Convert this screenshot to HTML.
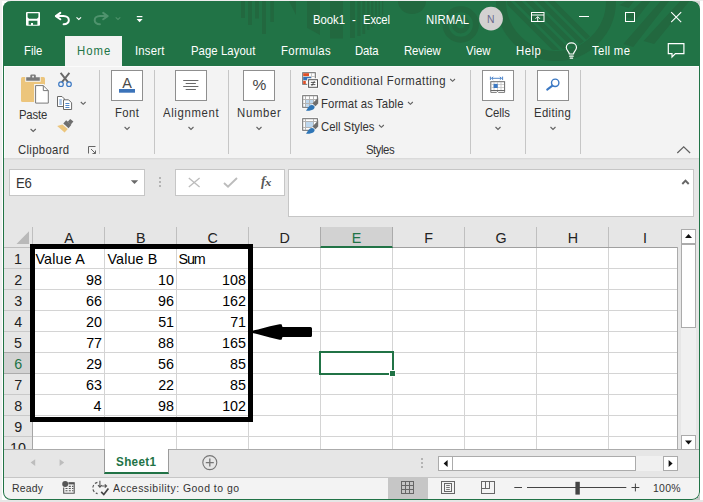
<!DOCTYPE html>
<html><head><meta charset="utf-8"><title>Book1 - Excel</title>
<style>
html,body{margin:0;padding:0}
body{width:703px;height:502px;overflow:hidden;background:#fff;position:relative;font-family:"Liberation Sans",sans-serif}
div,span,svg{position:absolute;box-sizing:border-box}
.t{white-space:nowrap;line-height:1}
.sep{width:1px;top:70px;height:84px;background:#c6c6c6}
.bx{width:32px;height:31px;top:70px;background:#fff;border:1px solid #8f8f8f}
.vl{width:1px;top:248px;height:201px;background:#d4d4d4}
.hl{height:1px;left:33px;width:645px;background:#d4d4d4}
.hs{width:1px;top:227px;height:20px;background:#bfbfbf}
.rs{height:1px;left:4px;width:28px;background:#c9c9c9}
</style></head><body>
<!-- title bar -->
<div style="left:3px;top:1px;width:697px;height:65px;background:#217346"></div>
<svg style="left:3px;top:1px" width="697" height="65" viewBox="3 1 697 65"><defs><clipPath id="cin"><circle cx="556" cy="1" r="49"/></clipPath><clipPath id="cr"><rect x="600" y="1" width="100" height="50"/></clipPath></defs>
<g fill="#22683f">
<rect x="241" y="1" width="4" height="17"/><rect x="248" y="1" width="4" height="24"/><rect x="255" y="1" width="4" height="17.5"/><rect x="262" y="1" width="4" height="33"/><rect x="270.3" y="1" width="3.5" height="21"/>
<path d="M289 1 H296 V15 Z"/>
<path d="M307 1 H320 V35 L307 27.7 Z"/>
<rect x="330" y="1" width="13" height="37.5"/><rect x="350" y="1" width="5" height="37"/><rect x="357.3" y="1" width="3.2" height="35"/><rect x="362.4" y="1" width="2.8" height="33"/><rect x="367" y="1" width="2.5" height="29"/><rect x="371.2" y="1" width="2.1" height="26"/><rect x="375" y="1" width="1.8" height="22"/><rect x="378.5" y="1" width="1.5" height="18"/><rect x="382" y="1" width="1.2" height="14"/>
<path d="M398 1 A14 13 0 0 0 426 1 Z"/>
</g>
<g fill="none" stroke="#22683f">
<circle cx="460.7" cy="24.5" r="15.2" stroke-width="6"/>
<circle cx="460.7" cy="24.5" r="6.5" stroke-width="4.8"/>
<circle cx="556" cy="1" r="55" stroke-width="10"/>
</g>
<g stroke="#22683f" stroke-width="5" clip-path="url(#cin)">
<path d="M496 -10 L596 90 M507 -10 L607 90 M518 -10 L618 90 M529 -10 L629 90 M540 -10 L640 90"/>
</g>
<path fill="#22683f" d="M626.5 1 H634.0 L628.5 8 L619.5 5 Z M642 1 H650.5 L635.7 20 L625.7 17 Z M660.7 1 H669.2 L633.3 47 L623.3 44 Z M680.3 1 H689.5 L654.2 44 L643.5 41 Z"/>
</svg>
<div style="left:65px;top:36px;width:57px;height:30px;background:#f3f3f3"></div>
<!-- ribbon -->
<div style="left:4px;top:66px;width:695px;height:92px;background:#f3f3f3;border-top:1px solid #fbfbfb;border-left:1px solid #fbfbfb"></div>
<div style="left:4px;top:158px;width:695px;height:341px;background:#e6e6e6"></div>
<div style="left:4px;top:158px;width:695px;height:1px;background:#dadada"></div><div style="left:4px;top:159px;width:695px;height:1px;background:#e1e1e1"></div>
<div class="sep" style="left:99px"></div><div class="sep" style="left:154px"></div><div class="sep" style="left:228px"></div><div class="sep" style="left:290px"></div><div class="sep" style="left:470px"></div><div class="sep" style="left:525px"></div><div class="sep" style="left:580px"></div>
<div class="bx" style="left:111px"></div><div class="bx" style="left:175px"></div><div class="bx" style="left:243px"></div><div class="bx" style="left:482px"></div><div class="bx" style="left:537px"></div>
<!-- formula bar -->
<div style="left:9px;top:169px;width:136px;height:27px;background:#fff;border:1px solid #c6c6c6"></div>
<div style="left:175px;top:169px;width:110px;height:27px;background:#fff;border:1px solid #c6c6c6"></div>
<div style="left:288px;top:169px;width:406px;height:48px;background:#fff;border:1px solid #c6c6c6"></div>
<!-- grid -->
<div style="left:33px;top:248px;width:645px;height:201px;background:#fff"></div>
<div class="vl" style="left:104px"></div><div class="vl" style="left:176px"></div><div class="vl" style="left:248px"></div><div class="vl" style="left:320px"></div><div class="vl" style="left:392px"></div><div class="vl" style="left:464px"></div><div class="vl" style="left:536px"></div><div class="vl" style="left:608px"></div><div class="hl" style="top:268px"></div><div class="hl" style="top:289px"></div><div class="hl" style="top:310px"></div><div class="hl" style="top:331px"></div><div class="hl" style="top:352px"></div><div class="hl" style="top:373px"></div><div class="hl" style="top:394px"></div><div class="hl" style="top:415px"></div><div class="hl" style="top:436px"></div><div class="hs" style="left:32px"></div><div class="hs" style="left:104px"></div><div class="hs" style="left:176px"></div><div class="hs" style="left:248px"></div><div class="hs" style="left:320px"></div><div class="hs" style="left:392px"></div><div class="hs" style="left:464px"></div><div class="hs" style="left:536px"></div><div class="hs" style="left:608px"></div><div class="rs" style="top:268px"></div><div class="rs" style="top:289px"></div><div class="rs" style="top:310px"></div><div class="rs" style="top:331px"></div><div class="rs" style="top:352px"></div><div class="rs" style="top:373px"></div><div class="rs" style="top:394px"></div><div class="rs" style="top:415px"></div><div class="rs" style="top:436px"></div>
<!-- header lines -->
<div style="left:4px;top:247px;width:674px;height:1px;background:#a0a0a0"></div><div style="left:4px;top:247px;width:28px;height:1px;background:#bdbdbd"></div>
<div style="left:32px;top:248px;width:1px;height:201px;background:#a6a6a6"></div>
<div style="left:320px;top:227px;width:73px;height:21px;background:#d2d2d2;border-left:1px solid #ababab;border-right:1px solid #ababab;border-bottom:2px solid #217346"></div>
<div style="left:677px;top:247px;width:1px;height:203px;background:#ababab"></div>
<div style="left:4px;top:352px;width:28px;height:22px;background:#d2d2d2;border-top:1px solid #ababab;border-bottom:1px solid #ababab"></div>
<!-- selection -->
<div style="left:319px;top:351px;width:75px;height:24px;border:2px solid #217346"></div>
<div style="left:389px;top:370px;width:7px;height:7px;background:#217346;border:1px solid #fff"></div>
<!-- black box + arrow -->
<div style="left:30px;top:244px;width:223px;height:178px;border:5px solid #000"></div>
<svg style="left:250px;top:320px" width="70" height="24" viewBox="250 320 70 24"><path d="M252.5 330.7 L258 329.4 L270 326.2 L279.5 324.3 L281.5 324.2 L282.5 327 L310.5 327 Q312 327 312 328.5 L312 335.5 Q312 337 310.5 337 L282.5 337 L281.5 339.8 L279.5 339.7 L270 337.6 L258 334.3 L252.5 333 Z" fill="#000"/></svg>
<!-- bottom: tab bar / scrollbars / status -->
<div style="left:4px;top:449px;width:695px;height:28px;background:#e6e6e6;border-top:1px solid #ababab"></div>
<div style="left:4px;top:477px;width:695px;height:22px;background:#f3f3f3;border-top:1px solid #c6c6c6"></div>
<div style="left:104px;top:449px;width:65px;height:25px;background:#fff;border-left:1px solid #9b9b9b;border-right:1px solid #9b9b9b;border-bottom:2px solid #217346"></div>
<svg style="left:0;top:0" width="703" height="502" viewBox="0 0 703 502" fill="none">
<!-- QAT -->
<path fill="#fff" fill-rule="evenodd" d="M27 12 H39 Q40 12 40 13 V24.7 Q40 25.7 39 25.7 H27 Q26 25.7 26 24.7 V13 Q26 12 27 12 Z M27.6 13.2 V17.3 L29 18.7 H37 L38.4 17.3 V13.2 Z M28.6 20.7 V24.7 H31 V22.9 H33 V24.7 H37.4 V20.7 Z"/>
<g stroke="#fff" stroke-width="2" fill="none" stroke-linecap="round" stroke-linejoin="round">
<path d="M60.3 12.9 L55.9 16.1 L60.3 19.3"/>
<path d="M56.2 16.1 H63.4 C70.6 16.1 70.6 24.2 63.6 24.2"/>
</g>
<path d="M76.5 17.3 L78.8 19.5 L81.1 17.3" stroke="#fff" stroke-width="1.1"/>
<g stroke="#4f936d" stroke-width="2" fill="none" stroke-linecap="round" stroke-linejoin="round">
<path d="M103.2 12.9 L107.6 16.1 L103.2 19.3"/>
<path d="M107.3 16.1 H100.1 C92.9 16.1 92.9 24.2 99.9 24.2"/>
</g>
<path d="M115.7 17.3 L118 19.5 L120.3 17.3" stroke="#4c9069" stroke-width="1.1"/>
<rect x="136.8" y="16" width="5.6" height="1.2" fill="#fff"/>
<path d="M136.6 19 H142.6 L139.6 22.2 Z" fill="#fff"/>
<!-- avatar -->
<circle cx="491" cy="18.6" r="11.9" fill="#d3d1d1"/>
<!-- window controls -->
<g stroke="#fff" stroke-width="1" fill="none">
<rect x="531.5" y="12.5" width="12.5" height="9"/>
<path d="M531.5 15 H544"/>
<path d="M537.7 21.5 V16.8 M535.5 18.8 L537.7 16.6 L539.9 18.8"/>
<path d="M579 16.5 H589"/>
<rect x="625.5" y="12.5" width="9" height="9"/>
<path d="M671.2 12.2 L681.2 22.2 M681.2 12.2 L671.2 22.2" stroke-width="1.1"/>
</g>
<!-- bulb -->
<g stroke="#fff" stroke-width="1.2" fill="none" stroke-linecap="round">
<path d="M569.3 54 C569.3 51.5 566.3 50.6 566.3 47.6 C566.3 44.8 568.6 42.9 571.4 42.9 C574.2 42.9 576.5 44.8 576.5 47.6 C576.5 50.6 573.5 51.5 573.5 54 Z"/>
<path d="M569.6 56.2 H573.2 M570.2 58.2 H572.6"/>
</g>
<!-- comment -->
<path d="M668.3 43.7 H683.9 V53.6 H675.4 L672 57 V53.6 H668.3 Z" stroke="#fff" stroke-width="1.2" fill="none"/>


<!-- paste icon -->
<rect x="21" y="77" width="24" height="25" rx="1.6" fill="#ecc57c"/>
<rect x="25.2" y="76.2" width="15.5" height="5.6" fill="#f3f3f3"/>
<path d="M26.2 77.2 H30.3 V75.6 Q30.3 74.4 31.5 74.4 H34.6 Q35.8 74.4 35.8 75.6 V77.2 H39.8 V80.8 H26.2 Z" fill="#797979"/>
<rect x="32.2" y="75.8" width="1.7" height="1.7" fill="#f3f3f3"/>
<path d="M34.1 84.1 H44 L49.8 89.9 V104.6 H34.1 Z" fill="#f6f6f6"/>
<path d="M35.6 85.6 H43.3 L48.3 90.6 V103.1 H35.6 Z" fill="#fff" stroke="#797979" stroke-width="1"/>
<path d="M43.3 85.6 V90.6 H48.3" stroke="#797979" stroke-width="1" fill="none"/>
<!-- scissors -->
<path d="M60.6 72.8 L68.2 82.3 M69.4 72.8 L61.8 82.3" stroke="#676767" stroke-width="1.9"/>
<circle cx="61" cy="84.2" r="2.3" stroke="#3b78c3" stroke-width="1.2"/>
<circle cx="69" cy="84.2" r="2.3" stroke="#3b78c3" stroke-width="1.2"/>
<!-- copy -->
<path d="M57.5 96.5 H62 L64.5 99 V106.5 H57.5 Z" fill="#fff" stroke="#6a6a6a"/>
<path d="M59.3 100 H61.8 M59.3 102 H61.8 M59.3 104 H61.8" stroke="#3b78c3" stroke-width="0.9"/>
<path d="M63.5 99.8 H68.6 L71.6 102.8 V109.5 H63.5 Z" fill="#fff" stroke="#6a6a6a"/>
<path d="M65.4 103.5 H69.4 M65.4 105.5 H69.4 M65.4 107.5 H69.4" stroke="#3b78c3" stroke-width="0.9"/>
<!-- brush -->
<path d="M70.2 118.9 L73.4 121.6 L70.8 124.4 L67.8 121.8 Z" fill="#6e6e6e"/>
<path d="M66.2 120.2 L71.4 124.8 L68.6 128.2 L63.3 123.6 Z" fill="#6e6e6e"/>
<path d="M62.4 124.4 L67.8 129.1 L64.6 132.6 L57.2 125.9 Z" fill="#ecc57c"/>
<!-- chevrons dark -->
<g stroke="#606060" stroke-width="1.1" fill="none">
<path d="M80.8 102 L83.2 104.3 L85.6 102"/>
<path d="M30.6 129 L33.2 131.5 L35.8 129"/>
<path d="M124.6 127 L127.1 129.4 L129.6 127"/>
<path d="M188.5 127 L191 129.4 L193.5 127"/>
<path d="M256.5 127 L259 129.4 L261.5 127"/>
<path d="M495.5 127 L498 129.4 L500.5 127"/>
<path d="M550.5 127 L553 129.4 L555.5 127"/>
<path d="M450.2 79 L452.6 81.3 L455 79"/>
<path d="M408 102 L410.4 104.3 L412.8 102"/>
<path d="M379 125 L381.4 127.3 L383.8 125"/>
<path d="M677.3 153 L683.7 146.8 L690.1 153" stroke-width="1.2"/>
</g>
<!-- dialog launcher -->
<path d="M88.5 153.5 V146.5 H95.5" stroke="#666" stroke-width="1" fill="none"/>
<path d="M91 149 L95.5 153.5 M95.5 150.5 V153.5 H92.5" stroke="#666" stroke-width="1" fill="none"/>
<!-- font A bar -->
<rect x="119" y="89" width="16" height="3.7" fill="#3b73b9"/>
<!-- alignment -->
<path d="M183.2 80.5 H198.4 M185.7 83.5 H195.9 M183.2 86.5 H198.4 M185.7 89.5 H195.9" stroke="#6a6a6a" stroke-width="1"/>
<!-- CF icon -->
<rect x="301.2" y="71.2" width="15.6" height="14.5" fill="#fafafa"/>
<rect x="302.7" y="72.7" width="12.6" height="11.6" fill="#fff" stroke="#6a6a6a"/>
<path d="M311.5 73 V84 M303 76.5 H315 M303 80.5 H315" stroke="#c8c8c8"/>
<rect x="303.2" y="73.2" width="5.8" height="2.8" fill="#e04e26"/>
<rect x="303.2" y="77" width="7.8" height="3" fill="#3573b9"/>
<rect x="303.2" y="81" width="2.6" height="3" fill="#e04e26"/>
<rect x="307.2" y="78.2" width="11.8" height="10.6" fill="#f8f8f8"/>
<rect x="308.6" y="79.7" width="8.9" height="7.6" fill="#fff" stroke="#555"/>
<path d="M310.8 82.4 H315.4 M310.8 84.6 H315.4 M314.4 81.2 L311.8 85.8" stroke="#444" stroke-width="0.9"/>
<!-- FT icon -->
<g id="ft">
<rect x="301.2" y="94.2" width="17.7" height="14.5" fill="#fafafa"/>
<rect x="302.7" y="95.7" width="14.7" height="11.6" fill="#fff" stroke="#6a6a6a"/>
<rect x="306" y="100" width="7.5" height="7" fill="#bdd7ee"/>
<path d="M305.5 96 V107 M309.5 96 V107 M313.5 96 V107 M303 99.5 H317 M303 103.5 H317" stroke="#b4b4b4"/>
<path d="M319 97 L311 105.5 L306 111.5 L320 111.5 Z" fill="#f3f3f3"/>
<path d="M318.2 97.4 V103.4 L315.4 106.2 L312.4 103.4 Z" fill="#6e6e6e"/>
<path d="M306 110.8 C308 108 309 104.8 312 104.9 C315.4 105.2 315.4 108.4 312.6 109.8 C310.6 110.8 308 110.8 306 110.8 Z" fill="#2e75b6"/>
</g>
<!-- CS icon -->
<rect x="301.2" y="117.2" width="17.7" height="14.5" fill="#fafafa"/>
<rect x="302.7" y="118.7" width="14.7" height="11.6" fill="#fff" stroke="#6a6a6a"/>
<rect x="306" y="122" width="7.5" height="5.5" fill="#bdd7ee"/>
<path d="M305.5 119 V130 M313.5 119 V130 M303 121.5 H317 M303 127.5 H317" stroke="#b4b4b4"/>
<path d="M319 120 L311 128.5 L306 134.5 L320 134.5 Z" fill="#f3f3f3"/>
<path d="M318.2 120.4 V126.4 L315.4 129.2 L312.4 126.4 Z" fill="#6e6e6e"/>
<path d="M306 133.8 C308 131 309 127.8 312 127.9 C315.4 128.2 315.4 131.4 312.6 132.8 C310.6 133.8 308 133.8 306 133.8 Z" fill="#2e75b6"/>
<!-- cells icon -->
<path d="M490.4 76.6 V80 M502.6 76.6 V80 M491.5 78.3 H501.5 M493.2 76.8 L491.6 78.3 L493.2 79.8 M499.8 76.8 L501.4 78.3 L499.8 79.8" stroke="#3b78c3" stroke-width="0.9"/>
<rect x="490.8" y="81.7" width="13.8" height="8.8" fill="#fff" stroke="#6a6a6a"/>
<path d="M494 82 V90 M497.5 82 V90 M501 82 V90 M491 84.5 H504 M491 87.5 H504" stroke="#c4c4c4" stroke-width="0.8"/>
<rect x="493.6" y="83.9" width="4.1" height="4.1" fill="#3b78c3"/>
<path d="M490.8 90.5 V92.4 H496.5 L497.5 91.4 L498.5 92.4 H504.6 V90.5" stroke="#6a6a6a" stroke-width="0.9"/>
<!-- magnifier -->
<circle cx="555.2" cy="82.8" r="3.7" stroke="#3b78c3" stroke-width="1.4"/>
<path d="M552.4 85.6 L547.2 89.6" stroke="#3b78c3" stroke-width="2" stroke-linecap="round"/>
<!-- name box arrow -->
<path d="M130.8 180.2 H138.2 L134.5 184 Z" fill="#6a6a6a"/>
<!-- dots -->
<path d="M159 177 h2 v2 h-2z M159 181 h2 v2 h-2z M159 185 h2 v2 h-2z" fill="#b4b4b4"/>
<path d="M421 458 h2 v2 h-2z M421 462 h2 v2 h-2z M421 466 h2 v2 h-2z" fill="#b4b4b4"/>
<!-- X / check -->
<path d="M188.8 178 L199.6 187 M199.6 178 L188.8 187" stroke="#bcbcbc" stroke-width="1.3"/>
<path d="M224 183 L228 186.6 L237 178" stroke="#bcbcbc" stroke-width="1.9"/>
<!-- formula caret -->
<path d="M682.3 184 L685.5 180.6 L688.7 184" stroke="#666" stroke-width="1.9"/>
<!-- select all -->
<path d="M29 231.2 V244 H16.5 Z" fill="#b9b9b9"/>
<!-- v scrollbar -->
<rect x="681" y="244" width="15" height="191" fill="#f0f0f0"/>
<rect x="681.5" y="229.5" width="14" height="14" fill="#fff" stroke="#ababab"/>
<rect x="681.5" y="244.5" width="14" height="83" fill="#fff" stroke="#ababab"/>
<rect x="681.5" y="435.5" width="14" height="14" fill="#fff" stroke="#ababab"/>
<path d="M685 238 L688.5 234 L692 238 Z" fill="#111"/>
<path d="M685 440.6 L692 440.6 L688.5 444.6 Z" fill="#111"/>
<!-- h scrollbar -->
<rect x="438" y="456" width="240" height="15" fill="#f0f0f0"/>
<rect x="438.5" y="456.5" width="14" height="14" fill="#fff" stroke="#ababab"/>
<rect x="452.5" y="456.5" width="183" height="14" fill="#fff" stroke="#ababab"/>
<rect x="663.5" y="456.5" width="14" height="14" fill="#fff" stroke="#ababab"/>
<path d="M447.6 460 V467 L443.6 463.5 Z" fill="#111"/>
<path d="M668.6 460 V467 L672.6 463.5 Z" fill="#111"/>
<!-- tab nav -->
<path d="M35.2 459.2 V466 L30.6 462.6 Z M59.6 459.2 V466 L64.2 462.6 Z" fill="#bdbdbd"/>
<circle cx="209.8" cy="462.6" r="7" stroke="#767676" stroke-width="1.1"/>
<path d="M205.8 462.6 H213.8 M209.8 458.6 V466.6" stroke="#767676" stroke-width="1.3"/>
<!-- status: macro -->
<circle cx="65.2" cy="484" r="3" fill="#555"/>
<path d="M68.5 482.8 H74.2 V493.2 H63.7 V487.5" stroke="#555" stroke-width="1.1"/>
<path d="M68.5 483.5 H74.2" stroke="#555" stroke-width="1.8"/>
<path d="M65.5 488.5 h2 M68.8 488.5 h2 M72 488.5 h1.4 M65.5 490.8 h2 M68.8 490.8 h2 M72 490.8 h1.4 M68.8 486.4 h2 M72 486.4 h1.4" stroke="#555" stroke-width="1.1"/>
<!-- status: accessibility -->
<path d="M97.4 482.4 A5.7 5.7 0 0 0 97.6 493.6" stroke="#555" stroke-width="1.2" stroke-dasharray="2.7 1.8"/>
<path d="M99.9 480.8 V487 M98 485.2 L99.9 487.3 L101.8 485.2" stroke="#555" stroke-width="1.1"/>
<path d="M101.6 486 H106.4 M104.8 484.3 L106.6 486 L104.8 487.7" stroke="#555" stroke-width="1.1"/>
<path d="M101.2 491.8 L103.8 494.5 L108.4 488.6" stroke="#444" stroke-width="1.7"/>
<!-- view buttons -->
<rect x="388" y="478" width="40" height="21" fill="#c6c6c6"/>
<rect x="401.5" y="481.5" width="12" height="12" stroke="#666"/>
<path d="M405.5 482 V493 M409.5 482 V493 M402 485.5 H413 M402 489.5 H413" stroke="#666"/>
<rect x="441.5" y="481.5" width="13" height="12" stroke="#666"/>
<rect x="444.5" y="483.5" width="7" height="8" stroke="#666" stroke-width="1"/>
<path d="M446.2 485.5 H449.8 M446.2 487.5 H449.8 M446.2 489.5 H449.8" stroke="#666" stroke-width="0.9"/>
<rect x="481.5" y="481.5" width="13" height="12" stroke="#666"/>
<path d="M485.5 482 V488.5 M489.5 482 V489 M482 488.5 H490" stroke="#666"/>
<!-- zoom slider -->
<path d="M514.3 487.5 H522 M527 487.5 H626.3 M631.5 487.5 H639.3 M635.4 483.6 V491.4" stroke="#444" stroke-width="1"/>
<rect x="575.4" y="481.8" width="4.4" height="12.8" fill="#444"/>
</svg>
<span class="t" style="left:122.2px;top:75.6px;font-size:14.4px;color:#4a4a4a">A</span>
<span class="t" style="left:252.6px;top:77.4px;font-size:15.5px;color:#444">%</span>
<span class="t" style="left:261px;top:174.6px;font-size:13.6px;font-weight:bold;color:#5a5a5a;font-family:'Liberation Serif',serif;font-style:italic">f</span><span class="t" style="left:265.4px;top:179.3px;font-size:9.5px;color:#505050;font-family:'Liberation Serif',serif;font-style:italic;font-weight:bold;transform:scaleX(1.35);transform-origin:0 0">x</span>

<span class="t" style="left:312.75px;top:14px;font-size:12.6px;color:#ffffff;letter-spacing:-0.044px;transform:scaleX(0.9);transform-origin:0 0;">Book1</span>
<span class="t" style="left:352.02px;top:14px;font-size:12.6px;color:#ffffff;letter-spacing:1.364px;transform:scaleX(0.9);transform-origin:0 0;">-</span>
<span class="t" style="left:363.35px;top:14px;font-size:12.6px;color:#ffffff;letter-spacing:-0.202px;transform:scaleX(0.9);transform-origin:0 0;">Excel</span>
<span class="t" style="left:426.15px;top:14px;font-size:12.6px;color:#ffffff;letter-spacing:0.076px;transform:scaleX(0.9);transform-origin:0 0;">NIRMAL</span>
<span class="t" style="left:487.00px;top:14px;font-size:11.5px;color:#6a6a8c;letter-spacing:0.414px;transform:scaleX(0.9);transform-origin:0 0;">N</span>
<span class="t" style="left:23.95px;top:45px;font-size:12.6px;color:#ffffff;letter-spacing:-0.006px;transform:scaleX(0.9);transform-origin:0 0;">File</span>
<span class="t" style="left:76.75px;top:45px;font-size:12.6px;color:#217346;letter-spacing:1.179px;transform:scaleX(0.9);transform-origin:0 0;">Home</span>
<span class="t" style="left:135.39px;top:45px;font-size:12.6px;color:#ffffff;letter-spacing:0.214px;transform:scaleX(0.9);transform-origin:0 0;">Insert</span>
<span class="t" style="left:190.95px;top:45px;font-size:12.6px;color:#ffffff;letter-spacing:0.070px;transform:scaleX(0.9);transform-origin:0 0;">Page Layout</span>
<span class="t" style="left:280.75px;top:45px;font-size:12.6px;color:#ffffff;letter-spacing:0.383px;transform:scaleX(0.9);transform-origin:0 0;">Formulas</span>
<span class="t" style="left:355.05px;top:45px;font-size:12.6px;color:#ffffff;letter-spacing:-0.140px;transform:scaleX(0.9);transform-origin:0 0;">Data</span>
<span class="t" style="left:404.15px;top:45px;font-size:12.6px;color:#ffffff;letter-spacing:-0.125px;transform:scaleX(0.9);transform-origin:0 0;">Review</span>
<span class="t" style="left:466.00px;top:45px;font-size:12.6px;color:#ffffff;letter-spacing:0.068px;transform:scaleX(0.9);transform-origin:0 0;">View</span>
<span class="t" style="left:515.95px;top:45px;font-size:12.6px;color:#ffffff;letter-spacing:0.547px;transform:scaleX(0.9);transform-origin:0 0;">Help</span>
<span class="t" style="left:591.80px;top:45px;font-size:12.6px;color:#ffffff;letter-spacing:0.377px;transform:scaleX(0.9);transform-origin:0 0;">Tell me</span>
<span class="t" style="left:18.85px;top:109px;font-size:12.6px;color:#333333;letter-spacing:-0.210px;transform:scaleX(0.9);transform-origin:0 0;">Paste</span>
<span class="t" style="left:17.67px;top:144px;font-size:12.6px;color:#333333;letter-spacing:0.355px;transform:scaleX(0.9);transform-origin:0 0;">Clipboard</span>
<span class="t" style="left:114.85px;top:107px;font-size:12.6px;color:#333333;letter-spacing:0.419px;transform:scaleX(0.9);transform-origin:0 0;">Font</span>
<span class="t" style="left:163.30px;top:107px;font-size:12.6px;color:#333333;letter-spacing:0.716px;transform:scaleX(0.9);transform-origin:0 0;">Alignment</span>
<span class="t" style="left:236.75px;top:107px;font-size:12.6px;color:#333333;letter-spacing:0.786px;transform:scaleX(0.9);transform-origin:0 0;">Number</span>
<span class="t" style="left:320.97px;top:75px;font-size:12.6px;color:#333333;letter-spacing:0.552px;transform:scaleX(0.9);transform-origin:0 0;">Conditional Formatting</span>
<span class="t" style="left:320.75px;top:98px;font-size:12.6px;color:#333333;letter-spacing:0.115px;transform:scaleX(0.9);transform-origin:0 0;">Format as Table</span>
<span class="t" style="left:320.97px;top:121px;font-size:12.6px;color:#333333;letter-spacing:-0.012px;transform:scaleX(0.9);transform-origin:0 0;">Cell Styles</span>
<span class="t" style="left:365.63px;top:144px;font-size:12.6px;color:#333333;letter-spacing:-0.497px;transform:scaleX(0.9);transform-origin:0 0;">Styles</span>
<span class="t" style="left:484.97px;top:107px;font-size:12.6px;color:#333333;letter-spacing:-0.086px;transform:scaleX(0.9);transform-origin:0 0;">Cells</span>
<span class="t" style="left:533.95px;top:107px;font-size:12.6px;color:#333333;letter-spacing:0.385px;transform:scaleX(0.9);transform-origin:0 0;">Editing</span>
<span class="t" style="left:16.19px;top:176px;font-size:14.6px;color:#333333;letter-spacing:-0.327px;transform:scaleX(0.9);transform-origin:0 0;">E6</span>
<span class="t" style="left:11.79px;top:482px;font-size:11.6px;color:#333333;letter-spacing:0.255px;transform:scaleX(0.9);transform-origin:0 0;">Ready</span>
<span class="t" style="left:112.50px;top:482px;font-size:11.6px;color:#333333;letter-spacing:0.543px;transform:scaleX(0.9);transform-origin:0 0;">Accessibility: Good to go</span>
<span class="t" style="left:652.66px;top:482px;font-size:11.6px;color:#333333;letter-spacing:0.342px;transform:scaleX(0.9);transform-origin:0 0;">100%</span>
<span class="t" style="left:115.98px;top:455px;font-size:13px;color:#217346;letter-spacing:0.373px;font-weight:bold;transform:scaleX(0.9);transform-origin:0 0;">Sheet1</span>
<span class="t" style="left:64.21px;top:231px;font-size:14.3px;color:#222;letter-spacing:0.000px;">A</span>
<span class="t" style="left:135.90px;top:231px;font-size:14.3px;color:#222;letter-spacing:0.000px;">B</span>
<span class="t" style="left:207.52px;top:231px;font-size:14.3px;color:#222;letter-spacing:0.000px;">C</span>
<span class="t" style="left:279.42px;top:231px;font-size:14.3px;color:#222;letter-spacing:0.000px;">D</span>
<span class="t" style="left:351.86px;top:231px;font-size:14.3px;color:#217346;letter-spacing:0.000px;">E</span>
<span class="t" style="left:424.29px;top:231px;font-size:14.3px;color:#222;letter-spacing:0.000px;">F</span>
<span class="t" style="left:495.43px;top:231px;font-size:14.3px;color:#222;letter-spacing:0.000px;">G</span>
<span class="t" style="left:567.79px;top:231px;font-size:14.3px;color:#222;letter-spacing:0.000px;">H</span>
<span class="t" style="left:642.89px;top:231px;font-size:14.3px;color:#222;letter-spacing:0.000px;">I</span>
<span class="t" style="left:14.05px;top:252px;font-size:14.3px;color:#222;letter-spacing:0.000px;">1</span>
<span class="t" style="left:14.17px;top:273px;font-size:14.3px;color:#222;letter-spacing:0.000px;">2</span>
<span class="t" style="left:14.14px;top:294px;font-size:14.3px;color:#222;letter-spacing:0.000px;">3</span>
<span class="t" style="left:14.20px;top:315px;font-size:14.3px;color:#222;letter-spacing:0.000px;">4</span>
<span class="t" style="left:14.08px;top:336px;font-size:14.3px;color:#222;letter-spacing:0.000px;">5</span>
<span class="t" style="left:14.13px;top:357px;font-size:14.3px;color:#217346;letter-spacing:0.000px;">6</span>
<span class="t" style="left:14.17px;top:378px;font-size:14.3px;color:#222;letter-spacing:0.000px;">7</span>
<span class="t" style="left:14.16px;top:399px;font-size:14.3px;color:#222;letter-spacing:0.000px;">8</span>
<span class="t" style="left:14.15px;top:420px;font-size:14.3px;color:#222;letter-spacing:0.000px;">9</span>
<span class="t" style="height:8px;overflow:hidden;left:10.01px;top:441px;font-size:14.3px;color:#222;letter-spacing:0.000px;">10</span>
<span class="t" style="left:35.44px;top:252px;font-size:14.3px;color:#000;letter-spacing:0.192px;">Value A</span>
<span class="t" style="left:107.54px;top:252px;font-size:14.3px;color:#000;letter-spacing:0.105px;">Value B</span>
<span class="t" style="left:178.54px;top:252px;font-size:14.3px;color:#000;letter-spacing:-1.175px;">Sum</span>
<span class="t" style="left:86.11px;top:273px;font-size:14.3px;color:#000;letter-spacing:0.000px;">98</span>
<span class="t" style="left:158.05px;top:273px;font-size:14.3px;color:#000;letter-spacing:0.000px;">10</span>
<span class="t" style="left:222.11px;top:273px;font-size:14.3px;color:#000;letter-spacing:0.000px;">108</span>
<span class="t" style="left:86.11px;top:294px;font-size:14.3px;color:#000;letter-spacing:0.000px;">66</span>
<span class="t" style="left:158.11px;top:294px;font-size:14.3px;color:#000;letter-spacing:0.000px;">96</span>
<span class="t" style="left:222.17px;top:294px;font-size:14.3px;color:#000;letter-spacing:0.000px;">162</span>
<span class="t" style="left:86.05px;top:315px;font-size:14.3px;color:#000;letter-spacing:0.000px;">20</span>
<span class="t" style="left:158.14px;top:315px;font-size:14.3px;color:#000;letter-spacing:0.000px;">51</span>
<span class="t" style="left:230.14px;top:315px;font-size:14.3px;color:#000;letter-spacing:0.000px;">71</span>
<span class="t" style="left:86.17px;top:336px;font-size:14.3px;color:#000;letter-spacing:0.000px;">77</span>
<span class="t" style="left:158.11px;top:336px;font-size:14.3px;color:#000;letter-spacing:0.000px;">88</span>
<span class="t" style="left:222.09px;top:336px;font-size:14.3px;color:#000;letter-spacing:0.000px;">165</span>
<span class="t" style="left:86.14px;top:357px;font-size:14.3px;color:#000;letter-spacing:0.000px;">29</span>
<span class="t" style="left:158.11px;top:357px;font-size:14.3px;color:#000;letter-spacing:0.000px;">56</span>
<span class="t" style="left:230.09px;top:357px;font-size:14.3px;color:#000;letter-spacing:0.000px;">85</span>
<span class="t" style="left:86.11px;top:378px;font-size:14.3px;color:#000;letter-spacing:0.000px;">63</span>
<span class="t" style="left:158.17px;top:378px;font-size:14.3px;color:#000;letter-spacing:0.000px;">22</span>
<span class="t" style="left:230.09px;top:378px;font-size:14.3px;color:#000;letter-spacing:0.000px;">85</span>
<span class="t" style="left:93.48px;top:399px;font-size:14.3px;color:#000;letter-spacing:0.000px;">4</span>
<span class="t" style="left:158.11px;top:399px;font-size:14.3px;color:#000;letter-spacing:0.000px;">98</span>
<span class="t" style="left:222.17px;top:399px;font-size:14.3px;color:#000;letter-spacing:0.000px;">102</span>
<!-- window frame -->
<div style="left:3px;top:1px;width:697px;height:499px;border:1px solid #217346;border-top:0;border-radius:8px;box-shadow:0 0 0 12px #fff"></div>
<svg style="left:690px;top:0" width="13" height="502" viewBox="690 0 13 502"><path d="M700 1 H692 A8 8 0 0 1 700 9 Z" fill="#d4d4d4"/><path d="M700 500 H692 A8 8 0 0 0 700 492 Z" fill="#c8c8c8"/></svg>
<div style="left:0;top:0;width:2px;height:502px;background:#f0f0f0"></div>
<div style="left:0;top:0;width:703px;height:1px;background:#eeeeee"></div>
<div style="left:0;top:500px;width:703px;height:2px;background:#e6e6e6"></div>
</body></html>
